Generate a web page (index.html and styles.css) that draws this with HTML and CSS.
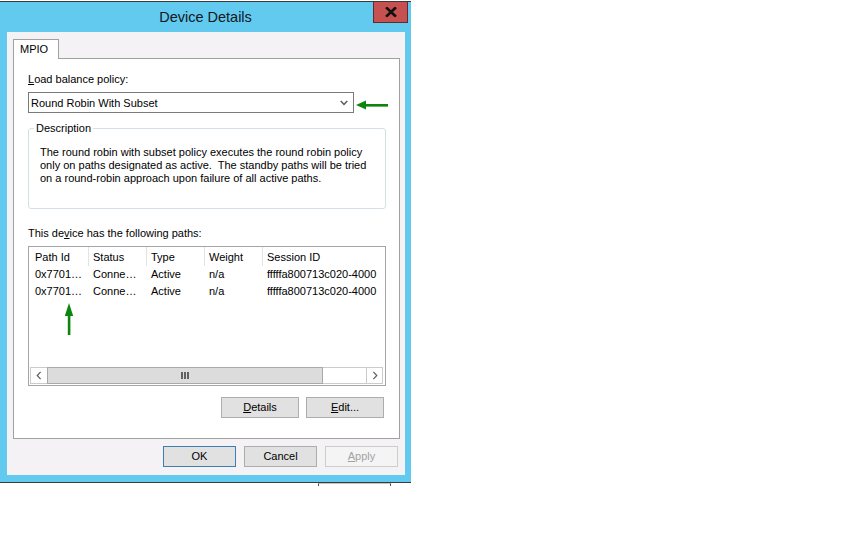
FILE: index.html
```html
<!DOCTYPE html>
<html>
<head>
<meta charset="utf-8">
<title>Device Details</title>
<link rel="stylesheet" href="styles.css">
</head>
<body>
<div class="window">
  <div class="titlebar">
    <div class="title">Device Details</div>
    <div class="close"><svg width="12" height="10" viewBox="0 0 12 10"><path d="M2 1.2 L10 8.8 M10 1.2 L2 8.8" stroke="#111" stroke-width="2.6" stroke-linecap="square"/></svg></div>
  </div>
  <div class="client">
    <div class="tabs"><div class="tab">MPIO</div></div>
    <div class="pane">
      <div class="label policy-label"><u>L</u>oad balance policy:</div>
      <div class="combo">
        <span class="combo-text">Round Robin With Subset</span>
        <svg class="combo-chev" width="8" height="6" viewBox="0 0 8 6"><path d="M0.8 1 L4 4.4 L7.2 1" fill="none" stroke="#5a5a5a" stroke-width="1.5"/></svg>
      </div>
      <fieldset class="group">
        <legend>Description</legend>
        <div class="desc">The round robin with subset policy executes the round robin policy<br>only on paths designated as active.&nbsp; The standby paths will be tried<br>on a round-robin approach upon failure of all active paths.</div>
      </fieldset>
      <div class="label paths-label">This de<u>v</u>ice has the following paths:</div>
      <div class="list">
        <div class="rows">
          <div class="row head">
            <div class="cell c1">Path Id</div><div class="cell">Status</div><div class="cell">Type</div><div class="cell">Weight</div><div class="cell last">Session ID</div>
          </div>
          <div class="row item">
            <div class="cell c1">0x7701…</div><div class="cell">Conne…</div><div class="cell">Active</div><div class="cell">n/a</div><div class="cell last">fffffa800713c020-4000</div>
          </div>
          <div class="row item">
            <div class="cell c1">0x7701…</div><div class="cell">Conne…</div><div class="cell">Active</div><div class="cell">n/a</div><div class="cell last">fffffa800713c020-4000</div>
          </div>
        </div>
        <div class="hscroll">
          <div class="sb-btn sb-left"><svg width="6" height="9" viewBox="0 0 6 9"><path d="M4.6 0.8 L1.2 4.5 L4.6 8.2" fill="none" stroke="#606060" stroke-width="1.2"/></svg></div>
          <div class="sb-thumb"><span class="grip"></span><span class="grip"></span><span class="grip"></span></div>
          <div class="sb-track"></div>
          <div class="sb-btn sb-right"><svg width="6" height="9" viewBox="0 0 6 9"><path d="M1.4 0.8 L4.8 4.5 L1.4 8.2" fill="none" stroke="#606060" stroke-width="1.2"/></svg></div>
        </div>
      </div>
      <div class="btnrow">
        <button class="btn wide"><u>D</u>etails</button>
        <button class="btn wide"><u>E</u>dit...</button>
      </div>
    </div>
    <div class="footer">
      <button class="btn ok">OK</button>
      <button class="btn">Cancel</button>
      <button class="btn disabled"><u>A</u>pply</button>
    </div>
  </div>
</div>
<div class="below"></div>

<svg class="arrow arrow-left" width="40" height="16" viewBox="0 0 40 16">
  <polygon points="1,7 11,2.5 11,11.5" fill="#0b850b"/>
  <rect x="10" y="6" width="23" height="2.6" fill="#0b850b"/>
</svg>
<svg class="arrow arrow-up" width="12" height="36" viewBox="0 0 12 36">
  <polygon points="6,1 1.8,14 10.2,14" fill="#0b850b"/>
  <rect x="4.8" y="13" width="2.6" height="20" fill="#0b850b"/>
</svg>
</body>
</html>
```

FILE: styles.css
```css
html, body {
  margin: 0;
  padding: 0;
  background: #ffffff;
}

body {
  font-family: "Liberation Sans", Arial, sans-serif;
  font-size: 11px;
  color: #000;
}

.window {
  width: 411px;
  margin-top: 1px;
  background: #62c9ef;
  border-top: 1px solid #3a3a3a;
  border-bottom: 1px solid #3a3a3a;
  padding-bottom: 7px;
}

.titlebar {
  height: 30px;
  display: grid;
  grid-template-areas: "a";
}

.title,
.close {
  grid-area: a;
}

.title {
  justify-self: center;
  align-self: center;
  font-size: 14.5px;
  color: #101820;
  padding-bottom: 1px;
}

.close {
  justify-self: end;
  align-self: start;
  width: 35px;
  height: 21px;
  margin-right: 3px;
  box-sizing: border-box;
  background: #c75050;
  border: 1px solid #5a2e2e;
  border-top: none;
  display: flex;
  align-items: center;
  justify-content: center;
}

.client {
  margin: 0 6px 0 7px;
  height: 443px;
  box-sizing: border-box;
  background: #f5f2f5;
  padding: 7px 5px 0 6px;
  display: flex;
  flex-direction: column;
}

.tabs {
  display: flex;
  height: 19px;
}

.tab {
  position: relative;
  z-index: 1;
  width: 46px;
  height: 20px;
  box-sizing: border-box;
  border: 1px solid #a0a0a0;
  border-bottom: none;
  background: #fff;
  padding-left: 6px;
  line-height: 18px;
}

.pane {
  height: 381px;
  box-sizing: border-box;
  border: 1px solid #a0a0a0;
  background: #fff;
  padding: 13px 13px 0 14px;
  display: flex;
  flex-direction: column;
}

.label {
  line-height: 15px;
  height: 15px;
  white-space: nowrap;
}

.label u {
  text-underline-offset: 1px;
}

.combo {
  margin-top: 5px;
  width: 326px;
  height: 21px;
  box-sizing: border-box;
  border: 1px solid #7a7a7a;
  display: flex;
  align-items: center;
  padding-left: 2px;
  background: #fff;
}

.combo-text {
  flex: 1;
}

.combo-chev {
  margin-right: 5px;
}

.group {
  margin: 8px 0 0 0;
  padding: 0;
  width: 358px;
  box-sizing: border-box;
  min-width: 0;
  border: 1px solid #d5dfe5;
  border-radius: 3px;
}

.group legend {
  padding: 0 2px;
  margin-left: 5px;
  line-height: 14px;
}

.desc {
  padding: 11px 8px 23px 11px;
  line-height: 13px;
  white-space: nowrap;
}

.paths-label {
  margin-top: 17px;
}

.list {
  margin-top: 5px;
  width: 358px;
  height: 140px;
  box-sizing: border-box;
  border: 1px solid #a2a5ab;
  display: flex;
  flex-direction: column;
  background: #fff;
}

.rows {
  flex: 1;
  overflow: hidden;
}

.row {
  display: grid;
  grid-template-columns: 60px 58px 58px 58px 1fr;
  white-space: nowrap;
}

.cell {
  padding-left: 4px;
  overflow: hidden;
}

.cell.c1 {
  padding-left: 6px;
}

.head {
  height: 19px;
  box-sizing: border-box;
  padding-top: 1px;
  line-height: 18px;
}

.head .cell {
  border-right: 1px solid #e3e3e3;
  margin-top: -1px;
  padding-top: 1px;
}

.head .cell.last {
  border-right: none;
}

.item {
  height: 17px;
  line-height: 17px;
}

.hscroll {
  display: flex;
  height: 17px;
  margin: 0 2px 1px 1px;
}

.sb-btn {
  width: 17px;
  box-sizing: border-box;
  border: 1px solid #cbcbcb;
  display: flex;
  align-items: center;
  justify-content: center;
  background: #fff;
}

.sb-left {
  border-right: none;
}

.sb-thumb {
  width: 276px;
  box-sizing: border-box;
  background: #dcdcdc;
  border: 1px solid #a9a9a9;
  display: flex;
  align-items: center;
  justify-content: center;
  gap: 1px;
}

.grip {
  width: 2px;
  height: 7px;
  background: #606060;
}

.sb-track {
  flex: 1;
  box-sizing: border-box;
  border-top: 1px solid #cbcbcb;
  border-bottom: 1px solid #cbcbcb;
  background: #fff;
}

.btnrow {
  margin-top: 11px;
  margin-right: 2px;
  display: flex;
  justify-content: flex-end;
  gap: 7px;
}

.btn {
  font: inherit;
  color: #000;
  width: 73px;
  height: 21px;
  box-sizing: border-box;
  padding: 0;
  background: #e1e1e1;
  border: 1px solid #adadad;
  border-radius: 0;
  line-height: 19px;
  text-align: center;
}

.btn u {
  text-underline-offset: 1px;
}

.btn.wide {
  width: 78px;
}

.footer {
  margin-top: 7px;
  margin-right: 2px;
  display: flex;
  justify-content: flex-end;
  gap: 8px;
}

.btn.ok {
  border-color: #3c7fb1;
}

.btn.disabled {
  background: #f4f4f4;
  border-color: #cdcdcd;
  color: #a2a2a2;
}

.below {
  margin-left: 318px;
  width: 71px;
  height: 2px;
  border-top: 1px solid #c4c4c4;
  border-left: 1px solid #505050;
  border-right: 1px solid #505050;
}

.arrow {
  position: absolute;
}

.arrow-left {
  left: 355px;
  top: 98px;
}

.arrow-up {
  left: 63px;
  top: 302px;
}
```
